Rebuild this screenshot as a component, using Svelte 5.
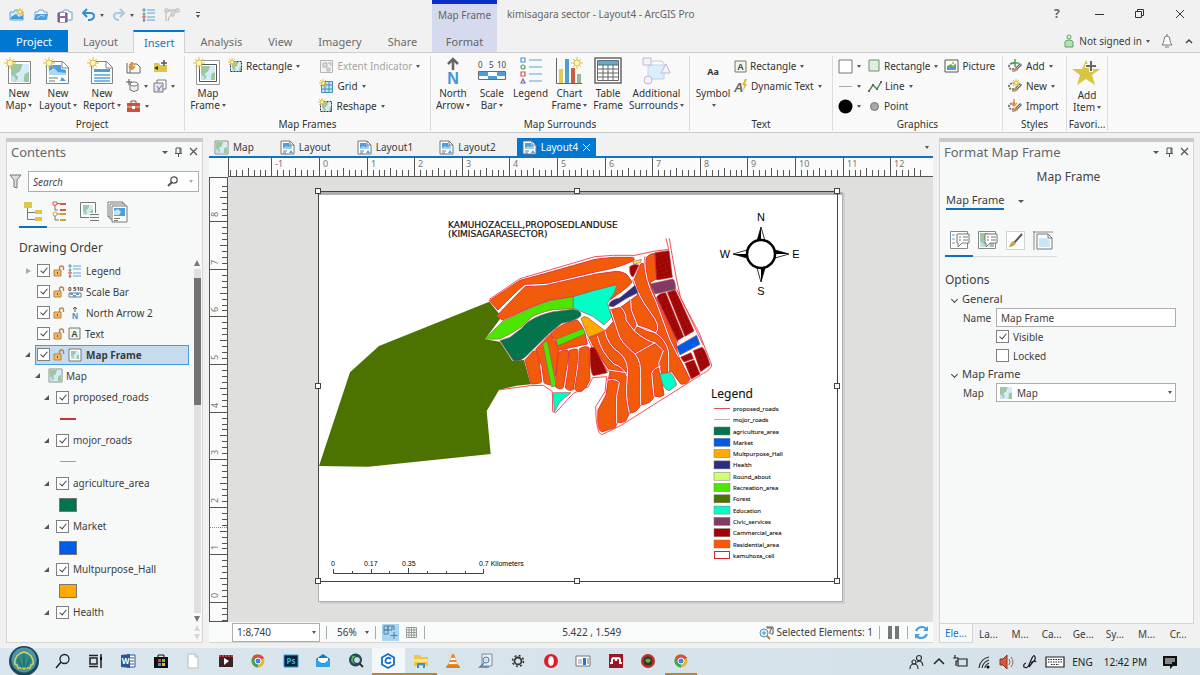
<script lang="ts">
  type Icon = [number, number, string];

  const sun = (x: number, y: number) =>
    `<g stroke="#e2c04c"><path d="M${x} ${y - 6}v12M${x - 6} ${y}h12M${x - 4} ${y - 4}l8 8M${x + 4} ${y - 4}l-8 8"/></g><circle cx="${x}" cy="${y}" r="3" fill="#fdf6b8" stroke="#e2c04c"/>`;

  const smallSun = (x: number, y: number) =>
    `<path d="M${x} ${y - 4}v8M${x - 4} ${y}h8M${x - 3} ${y - 3}l6 6M${x + 3} ${y - 3}l-6 6" stroke="#e2c04c"/><circle cx="${x}" cy="${y}" r="1.8" fill="#fdf3a8" stroke="#e2c04c"/>`;

  const mapArt = (x: number, y: number, s: number) =>
    `<g transform="translate(${x} ${y}) scale(${s / 20})"><path d="M0 0h20v20H0z" fill="#9cc7a2"/><path d="M13 0h7v9l-5 2-1 9H5l3-5-3-4 5-3z" fill="#d5ecf8"/><path d="M0 12l5 3v5H0z" fill="#c3e2e8"/></g>`;

  const docArt = `<path d="M1 1h9l4 4v9H1z" fill="#fff" stroke="#777"/><path d="M10 1v4h4" fill="none" stroke="#777"/><path d="M3 3h6v2l3 1v3H3z" fill="#4a9fdc"/><path d="M3 8l3-2 2 1 4-1v3H3z" fill="#9dd1f3"/><path d="M3 11h4M3 13h3" stroke="#777"/><path d="M9 13l2-3 2 3z" fill="#4a9fdc"/>`;

  const bullets = `<g fill="none" stroke-width="1"><path d="M1 1h2v2H1z" stroke="#4698d8"/><circle cx="2" cy="6" r="1" stroke="#4f9a59"/><path d="M1 8h2v2H1z" stroke="#d3574b"/><path d="M1 13l1-2 1 2z" stroke="#7a68ad"/><path d="M5 2h8M5 5h8M5 9h8M5 12h8" stroke="#59a3dc"/></g>`;

  const brush = `<path d="M7 4q-5 0-6 3 0 4 5 3" fill="none" stroke="#777" stroke-width="2" stroke-dasharray="2 1"/><path d="M13 5l-5 5" stroke="#666" stroke-width="3"/><path d="M8 9q-3 0-4 4 4 0 6-2z" fill="#c98e5d"/><path d="M12.500 5.500l-4 4" stroke="#c6d6e4"/>`;

  const icons: Record<string, Icon> = {
    newProject: [16, 14, `<path d="M1 4h4l1-2h4v2h4v8H1z" fill="#d3ebf8" stroke="#5ca7d8"/><path d="M2 9l5-3 3 3 4-2v4H2z" fill="#3f9bd7"/>${smallSun(11, 4)}`],
    open: [16, 14, `<path d="M2 4h3l1-2h4l1 2h3v7H2z" fill="#fff" stroke="#5ca7d8"/><path d="M1 12l2-6h12l-2 6z" fill="#4a9fdc"/><path d="M4 10q3-4 8-2" stroke="#c4e3f6" fill="none"/>`],
    save: [16, 15, `<path d="M3 4h3l1-2h4l1 2h3v8H3z" fill="#fff" stroke="#5ca7d8"/><path d="M1 5h9v9H1z" fill="#8d6a9f" stroke="#6e5480"/><path d="M3 5h5v3H3zM3 10h5v4H3z" fill="#fff"/>`],
    undo: [15, 14, `<path d="M2 5h7q4 0 4 3t-4 4H7" fill="none" stroke="#2f8fd3" stroke-width="2"/><path d="M6 1L2 5l4 4" fill="none" stroke="#2f8fd3" stroke-width="2"/>`],
    redo: [14, 14, `<path d="M12 5H6Q2 5 2 8t4 4h1" fill="none" stroke="#a9cbe2" stroke-width="2"/><path d="M8 1l4 4-4 4" fill="none" stroke="#a9cbe2" stroke-width="2"/>`],
    list: [14, 14, bullets],
    sketch: [16, 14, `<path d="M2 13V2h12M3 3l8 0M8 6q-4 3-4 7M8 7l6-5" fill="none" stroke="#b5b5b5"/><path d="M1 1h3v3H1zM12 1h3v3h-3zM7 5h3v3H7z" fill="#e5e5e5" stroke="#bbb"/>`],
    newMap: [30, 28, `<path d="M4.500 4.500h22v22h-22z" fill="#fff" stroke="#848484"/>${mapArt(7, 7, 18)}${sun(6, 6)}`],
    newLayout: [30, 28, `<path d="M3.500 4.500h16l6 6v16h-22z" fill="#fff" stroke="#848484"/><path d="M19 4v7h7" fill="none" stroke="#848484"/><path d="M6 8h12v4l5 1v5H6z" fill="#4a9fdc"/><path d="M6 14l5-3 4 4 8 1v2H6z" fill="#a9d8f5"/><path d="M6 21h9M6 24h6" stroke="#777"/><path d="M17 24l2-4 4 4z" fill="#4a9fdc"/>${sun(6, 6)}`],
    newReport: [30, 28, `<path d="M4.500 4.500h15l6 6v16h-21z" fill="#fff" stroke="#848484"/><path d="M19 4v7h7" fill="none" stroke="#848484"/><path d="M7 12h16v3H7z" fill="#4a9fdc"/><path d="M7 18h16M7 21h16M7 24h16" stroke="#7abbe4" stroke-width="2"/>${sun(6, 6)}`],
    mapFrame: [30, 28, `<path d="M3.500 3.500h23v24h-23z" fill="#fff" stroke="#999"/><path d="M6.500 7.500h17v17h-17z" fill="#fff" stroke="#555"/>${mapArt(8, 9, 14)}${sun(6, 6)}`],
    import: [15, 15, `<path d="M4 5h7l3 3v6H4z" fill="#fff" stroke="#666"/><path d="M6 3v6M3 7l3 3 3-3" fill="none" stroke="#e9902e" stroke-width="2"/><path d="M1 4v10h3" fill="none" stroke="#666"/>`],
    folderAdd: [15, 14, `<path d="M1 4h5l1 2h7v7H1z" fill="#dcc74c"/><path d="M1 9l4-2v4z" fill="#333"/><path d="M11 1v6M8 4h6" stroke="#555" stroke-width="1.500"/>`],
    database: [14, 14, `<path d="M4 5v6q4 3 8 0V5" fill="#eee" stroke="#777"/><ellipse cx="8" cy="5" rx="4" ry="2" fill="#fff" stroke="#777"/><path d="M3 0v6M0 3h6" stroke="#555"/>`],
    task: [14, 14, `<path d="M4 1h9v9H4z" fill="#fff" stroke="#777"/><path d="M1 4h9v9H1z" fill="#ebe4f3" stroke="#777"/><path d="M4 7l2 3 3-4M4 11h3" stroke="#7a68ad" fill="none"/>`],
    toolbox: [15, 13, `<path d="M5 3V1h5v2" fill="none" stroke="#a94434"/><path d="M1 3h13v9H1z" fill="#c8543f"/><path d="M1 7h13" stroke="#f3c3b8"/><path d="M6 6h3v3H6z" fill="#fff"/>`],
    frameRect: [14, 14, `${mapArt(3, 3, 10)}<path d="M1.500 2.500h11v10h-11z" fill="none" stroke="#333" stroke-dasharray="2 1"/>${smallSun(3, 3)}`],
    extent: [15, 15, `<path d="M1.500 1.500h12v12h-12z" fill="#f2f2f2" stroke="#b5b5b5"/><path d="M4 4h4v4H4zM8 9h3v3H8zM9 4h3v3" fill="#ddd" stroke="#b5b5b5"/>`],
    grid: [15, 15, `<path d="M2.500 2.500h11v11h-11z" fill="#c5e3f6" stroke="#3d8fca"/><path d="M6 3v11M10 3v11M3 6h11M3 10h11" stroke="#3d8fca"/>${smallSun(4, 4)}`],
    northArrow: [24, 28, `<path d="M12 13V2M7 7l5-5 5 5" fill="none" stroke="#666" stroke-width="2.500"/><text x="12" y="27" text-anchor="middle" font-size="16" font-weight="bold" font-family="Liberation Sans, sans-serif" fill="#3d97d6">N</text>`],
    scaleBar: [30, 28, `<g font-size="8" fill="#444"><text x="1" y="11">0</text><text x="12" y="11">5</text><text x="20" y="11">10</text></g><path d="M1.500 14.500h27v8h-27z" fill="#fff" stroke="#6b6b6b"/><path d="M2 15h9v4H2zM20 15h8v4h-8zM11 19h9v3h-9z" fill="#4a9fdc"/>`],
    legend: [24, 28, `<g fill="none" stroke-width="1.200"><path d="M2 1h4v4H2z" stroke="#4698d8"/><circle cx="4" cy="10" r="2" stroke="#4f9a59"/><path d="M2 15h4v4H2z" stroke="#d3574b"/><path d="M2 26l2-4 2 4z" stroke="#7a68ad"/><path d="M10 3h13M10 10h13M10 17h13M10 24h13" stroke="#59a3dc"/></g>`],
    chart: [28, 28, `<path d="M1.500 1v25.500H27" fill="none" stroke="#666"/><path d="M4 12h4v14H4z" fill="#ddcc56"/><path d="M10 2h4v24h-4z" fill="#4a9fdc"/><path d="M16 11h4v15h-4z" fill="#cf5a48"/><path d="M22 17h4v9h-4z" fill="#8fbd95"/>${sun(22, 6)}`],
    table: [28, 28, `<path d="M1 1h26v25H1z" fill="#fff" stroke="#666" stroke-width="1.500"/><path d="M3.500 3.500h21v20h-21z" fill="#fff" stroke="#666"/><path d="M4 4h20v4H4z" fill="#5cabe0"/><path d="M4 8h20M4 12h20M4 16h20M4 20h20M9 8v15M14 8v15M19 8v15" stroke="#666"/>`],
    surrounds: [28, 28, `<path d="M6 8h16v14H6z" fill="#dceefa" stroke="#bcd4e8"/><path d="M1 1h8v7H1z" fill="#f6f1fa" stroke="#c3b6d6"/><path d="M19 16l5-9 4 9z" fill="#f6f1fa" stroke="#c3b6d6"/><circle cx="6" cy="23" r="4" fill="#f6f1fa" stroke="#c3b6d6"/><path d="M9 4h11l3 4" fill="none" stroke="#cfc4de"/>`],
    aa: [24, 28, `<text x="12" y="18" text-anchor="middle" font-size="9" font-weight="bold" fill="#333">Aa</text>`],
    textBox: [13, 13, `<path d="M1 1h11v11H1z" fill="#eef6ee" stroke="#777"/><text x="6.500" y="10" text-anchor="middle" font-size="9" font-weight="bold" font-family="Liberation Sans, sans-serif" fill="#444">A</text>`],
    dynText: [14, 15, `<text x="0" y="13" font-size="13" font-style="italic" font-weight="bold" font-family="Liberation Sans, sans-serif" fill="#666">A</text><path d="M11 0L8 6h2l-1 6 4-7h-2l2-5z" fill="#dcb83c"/>`],
    box: [15, 15, `<path d="M1 1h13v13H1z" fill="#fff" stroke="#777"/>`],
    line: [15, 15, `<path d="M1 7.500h13" stroke="#aaa"/>`],
    dot: [15, 15, `<circle cx="7.500" cy="7.500" r="7" fill="#000"/>`],
    greenRect: [13, 14, `<path d="M1 1h10v11H1z" fill="#dcf0dc" stroke="#6f8f74"/>`],
    polyline: [14, 13, `<path d="M1 11l4-6 4 4 4-7" fill="none" stroke="#4f8f59" stroke-width="1.500"/><path d="M0 10h2v2H0zM4 4h2v2H4zM8 8h2v2H8zM12 1h2v2h-2z" fill="#666"/>`],
    point: [13, 13, `<circle cx="6.500" cy="6.500" r="4" fill="#a8a8a8" stroke="#777"/>`],
    picture: [15, 14, `<path d="M1 1h13v12H1z" fill="#fff" stroke="#555"/><path d="M3 7l4-2 2 2 3-3v4H3z" fill="#6daa5c"/><path d="M3 8h9v3H3z" fill="#4a9fdc"/><circle cx="9" cy="4" r="1.200" fill="#dcb83c"/>`],
    styleAdd: [15, 14, `${brush}<path d="M7 0v8M3 4h8" stroke="#4d9f58" stroke-width="1.500"/>`],
    styleNew: [15, 14, `${brush}${smallSun(8, 4)}`],
    styleImport: [15, 14, `${brush}<path d="M6 0v7M3 4l3 3 3-3" fill="none" stroke="#e9902e" stroke-width="1.500"/>`],
    star: [30, 30, `<path d="M14 3l4 9h10l-8 6 3 10-9-6-9 6 3-10-8-6h10z" fill="#d8c542"/><path d="M19 3v12M13 9h12" stroke="#f8f8f8" stroke-width="4"/><path d="M19 4v10M14 9h10" stroke="#666" stroke-width="2"/>`],
    user: [12, 15, `<circle cx="6" cy="3" r="2" fill="#dff2df" stroke="#58a662"/><path d="M2 13V8q0-2 4-2t4 2v5z" fill="#b9deb9" stroke="#58a662"/>`],
    bell: [14, 15, `<path d="M2 11q2-2 2-5 0-4 3-4t3 4q0 3 2 5z" fill="#fff" stroke="#777"/><path d="M7 0v2M5 13h4" stroke="#777"/>`],
    up: [10, 8, `<path d="M2 6l3-3 3 3" fill="none" stroke="#444" stroke-width="1.500"/>`],
    filter: [13, 15, `<path d="M1 1h11L8 6v8l-3-1V6z" fill="#ddd" stroke="#777"/>`],
    search: [13, 13, `<circle cx="8" cy="5" r="3.200" fill="none" stroke="#555" stroke-width="1.300"/><path d="M6 7l-4 4" stroke="#555" stroke-width="2"/>`],
    byDraw: [20, 22, `<path d="M1 1h8v6H1zM12 9h7v4h-7zM12 16h7v4h-7z" fill="#dcc74c"/><path d="M4.500 7v11.500H12M5 11.500h7" fill="none" stroke="#777"/>`],
    bySource: [18, 22, `<path d="M1 1h4v3H1z" fill="#fff" stroke="#d3574b"/><circle cx="3" cy="13" r="2" fill="#fff" stroke="#c6a63b"/><path d="M3 4v5h3M5 2.500h3M3 15v4h4M5 13h3" fill="none" stroke="#777"/><path d="M8 3h6M8 9h6" stroke="#d3574b" stroke-width="2"/><path d="M8 13h6M8 19h6" stroke="#c6a63b" stroke-width="2"/>`],
    byMap: [21, 22, `<path d="M1.500 1.500h15v15h-15z" fill="#fff" stroke="#777"/>${mapArt(4, 4, 10)}<path d="M10 12h10v8H10z" fill="#f7f9f9"/><path d="M11 13.500h9M11 16.500h9M11 19.500h9" stroke="#777"/>`],
    byLayout: [21, 22, `<path d="M1 1h15v15H1z" fill="#fff" stroke="#777"/><path d="M3 3h15v15H3z" fill="#fff" stroke="#777"/><path d="M5 5h15v16H5z" fill="#fff" stroke="#777"/><path d="M7 7h11v8H7z" fill="#4a9fdc"/><path d="M7 10l4-2 3 3-2 3H7z" fill="#c7e5f7"/><path d="M7 17.500h6M7 19.500h4" stroke="#777"/>`],
    lock: [12, 13, `<path d="M6.500 6V4q0-2 2-2t2 2v2" fill="none" stroke="#b98345" stroke-width="1.400"/><path d="M1 6h7v6H1z" fill="#f3b866" stroke="#b98345"/><path d="M4 8h1v2H4z" fill="#7a5223"/>`],
    scaleMini: [14, 13, `<text x="0" y="6" font-size="6" font-weight="bold" fill="#444">0 510</text><path d="M1 8h12v4H1z" fill="#fff" stroke="#777"/><path d="M2 8h3v2H2zM8 8h3v2H8zM5 10h3v2H5z" fill="#4a9fdc"/>`],
    northMini: [14, 14, `<path d="M7 6V1M5 3l2-2 2 2" fill="none" stroke="#555"/><text x="7" y="13" text-anchor="middle" font-size="8" font-weight="bold" fill="#3d97d6">N</text>`],
    frameMini: [14, 14, `<path d="M1 1h12v12H1z" fill="#fff" stroke="#777"/>${mapArt(3, 3, 8)}`],
    map: [15, 15, `<path d="M1 1h13v13H1z" fill="#fff" stroke="#8a8a8a"/>${mapArt(2, 2, 11)}`],
    doc: [15, 15, docArt],
    optList: [21, 21, `<path d="M1.500 1.500h17v17h-17z" fill="#fff" stroke="#888"/><path d="M3 5h3M3 9h3M3 13h3" stroke="#59a3dc"/><path d="M8 4h12v9h-7l-4 4v-4H8z" fill="#fff" stroke="#777"/><path d="M10 7h2M14 7h5M10 10h2M14 10h5" stroke="#777"/>`],
    optMap: [21, 21, `<path d="M1.500 1.500h17v17h-17z" fill="#fff" stroke="#888"/>${mapArt(3, 3, 14)}<path d="M8 4h12v9h-7l-4 4v-4H8z" fill="#fff" stroke="#777"/><path d="M10 7h2M14 7h5M10 10h2M14 10h5" stroke="#777"/>`],
    optBrush: [21, 21, `<path d="M1.500 1.500h18v18h-18z" fill="#fff" stroke="#aaa" stroke-dasharray="1 1"/><path d="M17 4l-8 9" stroke="#555" stroke-width="2"/><path d="M9 11q-3 0-5 6 5 0 7-4z" fill="#c3a15c"/>`],
    optPage: [22, 21, `<path d="M1 2h20M2 1v19" stroke="#888"/><path d="M5 4h11l4 4v11H5z" fill="#fff" stroke="#777"/><path d="M7 8h8l3 3v6H7z" fill="#cbe5f6"/><path d="M16 4v4h4" fill="none" stroke="#777"/>`],
    snap: [17, 17, `<path d="M2 2h4v4H2zM6 2h4v4H6zM2 6h4v4H2z" fill="none" stroke="#4f7f9f"/><path d="M12 8v7M8.500 11.500h7" stroke="#4f7f9f"/><path d="M10 2h2v4" fill="none" stroke="#4f7f9f"/>`],
    gridMini: [13, 13, `<path d="M1.500 1.500h10v10h-10zM4 1v10M6.500 1v10M9 1v10M1 4h10M1 6.500h10M1 9h10" fill="none" stroke="#999"/>`],
    zoomSel: [15, 15, `<circle cx="5" cy="8" r="4" fill="#e5f3fb" stroke="#4a8fc4"/><path d="M5 6v4M3 8h4" stroke="#4a8fc4"/><path d="M8 11l3 3" stroke="#b5814a" stroke-width="2"/><path d="M7 2h7v7h-2" fill="none" stroke="#555"/><path d="M8 3h5l-2 3v3" fill="none" stroke="#555"/>`],
    refresh: [15, 15, `<path d="M2 6q2-4 6-4 3 0 4 2M13 9q-2 4-6 4-3 0-4-2" fill="none" stroke="#45a0df" stroke-width="2.200"/><path d="M14 1v5H9zM1 14V9h5z" fill="#45a0df"/>`],
    tSearch: [16, 16, `<circle cx="9.500" cy="6" r="4.500" fill="none" stroke="#222" stroke-width="1.300"/><path d="M6 9l-5 6" stroke="#222" stroke-width="1.500"/>`],
    tTask: [16, 16, `<path d="M1 2.500h9M1 13.500h9" stroke="#222" stroke-width="1.500"/><path d="M2 5h7v6H2zM13 1v3M13 6v9" fill="none" stroke="#222" stroke-width="1.500"/><path d="M12 4h2v3h-2z"/>`],
    tWord: [16, 16, `<path d="M7 2h8v12H7z" fill="#fff" stroke="#2b5797"/><path d="M10 5h4M10 8h4M10 11h4" stroke="#2b5797"/><path d="M1 2l9-1v14l-9-1z" fill="#2b5797"/><text x="5.500" y="11" text-anchor="middle" font-size="8" font-weight="bold" fill="#fff">W</text>`],
    tStore: [16, 16, `<path d="M5 5V2h6v3" fill="none" stroke="#111"/><path d="M1 4h14v11H1z" fill="#111"/><path d="M5 6h3v3H5z" fill="#e64a2b"/><path d="M9 6h3v3H9z" fill="#7fb93a"/><path d="M5 10h3v3H5z" fill="#34a0dc"/><path d="M9 10h3v3H9z" fill="#f2b82b"/>`],
    tFile: [16, 16, `<path d="M3 1h7l3 3v11H3z" fill="#fff" stroke="#bbb"/><path d="M10 1v3h3" fill="none" stroke="#bbb"/>`],
    tVideo: [16, 16, `<path d="M1 2h14v12H1z" fill="#3d2226"/><path d="M1 3h14" stroke="#c3403f" stroke-dasharray="2 1" stroke-width="2"/><path d="M6 5l5 3-5 4z" fill="#fff"/>`],
    tChrome: [16, 16, `<circle cx="8" cy="8" r="6.500" fill="#e2b93b"/><path d="M8 8L2 5q2-4 6-3.500 4 0 6 3.500z" fill="#dd4b39"/><path d="M8 8L2 5q-1.500 4 1 7 2 2.500 5 2.500z" fill="#3fa35b"/><circle cx="8" cy="8" r="3" fill="#4a84d8" stroke="#fff"/>`],
    tPs: [16, 16, `<path d="M1 2h14v12H1z" fill="#0b2035" stroke="#2aa0d8"/><text x="8" y="11" text-anchor="middle" font-size="8" font-weight="bold" fill="#36b3f2">Ps</text>`],
    tMail: [16, 16, `<path d="M1 6l7-5 7 5v8H1z" fill="#1678c2"/><path d="M3 5h10v5H3z" fill="#fff"/><path d="M1 6l7 5 7-5v8H1z" fill="#2ea3ea"/>`],
    tGis: [16, 16, `<circle cx="7.500" cy="7" r="6.500" fill="#1c4c58"/><path d="M4 3q5-1 6 3l-4 5-3-3z" fill="#5fae6b"/><circle cx="9" cy="7" r="3.500" fill="#bfe2f2" stroke="#333"/><path d="M11 10l4 4" stroke="#333" stroke-width="2"/>`],
    tPro: [16, 16, `<path d="M8 1l6 3.500v7L8 15l-6-3.500v-7z" fill="#fff" stroke="#1670c4" stroke-width="1.800"/><path d="M11 6q-3-2.500-5 0-1.500 3 1 4 2 .8 4-1" fill="none" stroke="#1670c4" stroke-width="1.800"/>`],
    tFolder: [16, 16, `<path d="M1 2h6l1 2h7v9H1z" fill="#f1c54a"/><path d="M1 6h14v3H1z" fill="#fbe08d"/><path d="M4 15v-5h8v5h-2v-3H6v3z" fill="#3b8ed0"/>`],
    tVlc: [16, 16, `<path d="M7 1h2l4 11H3z" fill="#ef8a24"/><path d="M6 5h4l1 2H5zM4.500 9h7l.6 2H4z" fill="#fff"/><path d="M2 12h12l1 3H1z" fill="#e07c1c"/>`],
    tNote: [16, 16, `<path d="M4 1h10v12H4z" fill="#e8eef4" stroke="#889"/><circle cx="8" cy="7" r="3" fill="#cfe3f2" stroke="#5580a4"/><path d="M6 10l-4 4h9" fill="none" stroke="#5580a4" stroke-width="1.500"/>`],
    tGear: [16, 16, `<circle cx="8" cy="8" r="3.500" fill="none" stroke="#333" stroke-width="1.800"/><circle cx="8" cy="8" r="5.500" fill="none" stroke="#333" stroke-width="1.500" stroke-dasharray="2 2.320"/>`],
    tOpera: [16, 16, `<circle cx="8" cy="8" r="7" fill="#d9202c"/><ellipse cx="8" cy="8" rx="2.800" ry="4.800" fill="#fff"/>`],
    tApp: [16, 16, `<path d="M1 3h14v10H1z" fill="#fff" stroke="#777"/><path d="M3 6h4v5H3z" fill="#ccc"/><path d="M8 5h3v7H8z" fill="#1f78c0"/><path d="M12 6h2M12 8h2M12 10h2" stroke="#777"/>`],
    tMendeley: [16, 16, `<path d="M1 1h14v14H1z" fill="#9c1626"/><path d="M4 11V7q0-2 2-2t2 3q0-3 2-3t2 2v4M2 10h2M12 10h2" fill="none" stroke="#fff" stroke-width="2"/>`],
    tCam: [16, 16, `<circle cx="8" cy="8" r="7" fill="#c22f26"/><circle cx="8" cy="8" r="4.500" fill="#263b2a"/><path d="M5 7q3-3 6 0-1 3-3 3T5 7z" fill="#6dae3e"/>`],
    people: [16, 16, `<g fill="none" stroke="#333" stroke-width="1.200"><circle cx="10" cy="4" r="2.500"/><circle cx="5" cy="8" r="2"/><path d="M1 15q0-5 4-5t4 5M8 8q5-3 6 4"/></g>`],
    chevron: [14, 16, `<path d="M2 10l5-5 5 5" fill="none" stroke="#222" stroke-width="1.500"/>`],
    battery: [16, 16, `<path d="M5 5h9v7H5zM2 1v3M0 4h5v3H3v5" fill="none" stroke="#222" stroke-width="1.200"/>`],
    wifi: [16, 16, `<g fill="none" stroke="#333" stroke-width="1.200"><path d="M3 14Q4 5 13 3M6 14q1-6 7-8M9 14q0-3 4-5"/></g><circle cx="12" cy="13" r="1.500"/>`],
    speaker: [16, 16, `<path d="M1 5h3l4-4v14l-4-4H1z" fill="#e0523c" stroke="#7c3a2e"/><path d="M10 5q2 3 0 6M12 3q4 5 0 10" fill="none" stroke="#a45f4f"/>`],
    pen: [16, 16, `<g fill="none" stroke="#222" stroke-width="1.300"><path d="M4 9q-3 1-2 4 3 2 5-2l3-7q2-4 3-1t-3 6l-3 4M9 9q4-3 5-1"/></g>`],
    keyboard: [20, 16, `<path d="M1 3h18v10H1z" fill="#fff" stroke="#222" stroke-width="1.200"/><path d="M3 5.500h14M3 8h14M6 10.500h8" stroke="#222" stroke-dasharray="1.500 1"/>`],
    notify: [16, 16, `<path d="M1 2h14v10h-4l-3 3v-3H1z" fill="#111"/><path d="M3 5h10M3 7h10M3 9h7" stroke="#fff"/>`],
    pin: [9, 11, `<path d="M2 6V1h5v5M1 6.500h7M4.500 7v3M6 1v5" fill="none" stroke="#555"/>`],
    close: [10, 10, `<path d="M1 1l7 7M8 1L1 8" stroke="#555" stroke-width="1.200"/>`],
    min: [12, 12, `<path d="M1 6.500h9" stroke="#333"/>`],
    restore: [12, 12, `<path d="M1.500 3.500h6v6h-6zM3.500 3V1.500h6v6H8" fill="none" stroke="#333"/>`],
    quit: [12, 12, `<path d="M2 2l8 8M10 2l-8 8" stroke="#333"/>`],
    shell: [30, 30, `<circle cx="15" cy="15" r="15" fill="#1c4a5c"/><circle cx="15" cy="14" r="12.500" fill="#4a96a6"/><path d="M9 22l-1-3-2-1 0-4 2-4 4-3 3-1 3 1 4 3 2 4 0 4-2 1-1 3h-5l-1 1-1-1z" fill="#2f8b86" stroke="#d8cf62" stroke-width="1.500"/><path d="M15 22V9M13 22l-4-9M17 22l4-9" stroke="#1f6468" fill="none"/>`],
  };

  const quickAccess = ['newProject', 'open', 'save', 'undo+', 'redo+', 'list', 'sketch'];
  const ribbonTabs = ['Project', 'Layout', 'Insert', 'Analysis', 'View', 'Imagery', 'Share'];
  let activeTab = $state('Insert');

  const drawing = [
    { icon: 'list', name: 'Legend', closed: true },
    { icon: 'scaleMini', name: 'Scale Bar' },
    { icon: 'northMini', name: 'North Arrow 2' },
    { icon: 'textBox', name: 'Text' },
  ];
  const layers = [
    { name: 'proposed_roads', kind: 'road' },
    { name: 'mojor_roads', kind: 'road-thin' },
    { name: 'agriculture_area', kind: 'green' },
    { name: 'Market', kind: 'blue' },
    { name: 'Multpurpose_Hall', kind: 'amber' },
    { name: 'Health', kind: '' },
  ];

  const docs = ['Map', 'Layout', 'Layout1', 'Layout2', 'Layout4'];
  const paneTabs = ['Ele...', 'La...', 'M...', 'Ca...', 'Ge...', 'Sy...', 'M...', 'Cr...'];
  const taskIcons = [
    'tSearch', 'tTask', 'tWord', 'tStore', 'tFile', 'tVideo', 'tChrome', 'tPs', 'tMail', 'tGis',
    'tPro', 'tFolder', 'tVlc', 'tNote', 'tGear', 'tOpera', 'tApp', 'tMendeley', 'tCam', 'tChrome',
  ];
  const trayIcons = ['people', 'chevron', 'battery', 'wifi', 'speaker', 'pen', 'keyboard'];

  const legend = [
    ['agriculture_area', '#04744c'],
    ['Market', '#005ce6'],
    ['Multpurpose_Hall', '#ffaa00'],
    ['Health', '#2c2f7f'],
    ['Round_about', '#d1ff73'],
    ['Recreation_area', '#4ce600'],
    ['Forest', '#4c7300'],
    ['Education', '#00ffc5'],
    ['Civic_services', '#833b66'],
    ['Cammercial_area', '#a80000'],
    ['Residential_area', '#ff5500'],
  ];

  // ruler: one inch is 47.6px, cut in eighths
  const INCH = 47.6;
  let boardWidth = $state(705);
  let boardHeight = $state(445);
  const hPos = (t: number) => Math.round(90 + (t * INCH) / 8);
  const vPos = (t: number) => Math.round(424 - (t * INCH) / 8);
  let hTicks = $derived(Array.from({ length: 300 }, (_, i) => i - 15).filter((t) => hPos(t) < boardWidth - 8));
  let vTicks = $derived(Array.from({ length: 100 }, (_, i) => i - 20).filter((t) => vPos(t) > 4 && vPos(t) < boardHeight - 2));
  const handles = [[318, 191], [577, 191], [837, 191], [318, 386], [837, 386], [318, 581], [577, 581], [837, 581]];

  const blocks = [
    'M58 212L150 151Q240 127 375 88L430 82L488 82Q498 88 488 93Q450 112 380 125L230 160L165 163Q140 182 84 240Z',
    'M80 258L165 170L225 167L380 132L440 124Q465 126 474 138L486 156Q480 168 440 195L420 210L437 167L370 182L310 200L240 210L190 228L97 270Z',
    'M240 313Q270 280 322 270Q335 282 345 310L352 342L268 360Q256 350 258 330Z',
    'M165 390L190 363Q202 362 205 374L215 455Q212 462 183 462Z',
    'M197 358L238 315Q250 318 262 350Q272 362 264 390L252 460Q242 470 222 458L216 410Z',
    'M264 370Q280 356 292 360Q300 366 292 400L280 472Q272 482 256 470Z',
    'M297 362Q312 354 322 358Q326 370 320 410L310 478Q300 486 286 474L296 410Z',
    'M328 356Q345 346 357 352L360 448Q350 475 335 484Q320 486 314 478L326 410Z',
    'M530 82Q540 70 553 70L560 146L540 158L555 200L618 330L622 372L660 448Q650 465 632 462L605 425L572 430L582 495Q570 505 552 498Q548 520 512 525Q500 550 478 549L468 572Q455 582 441 576L437 592L395 606Q380 600 384 540L408 495L414 455L420 425L385 370L355 324L405 303L430 275L420 240L452 232L503 195L492 150L512 102Q520 96 528 110Z',
  ];
  const roads = [
    'M526 80Q520 120 540 175L560 220L600 330L625 380',
    'M490 148Q505 200 540 245Q575 290 558 308Q530 305 498 285',
    'M453 232Q470 250 468 270L492 302L502 285L484 240L482 208',
    'M500 288Q540 296 565 315Q600 345 596 385L596 425',
    'M492 302Q530 335 555 338L580 362L566 400L572 430',
    'M422 240L445 310Q450 335 495 372Q515 395 512 440L512 525',
    'M495 372L555 338',
    'M405 303Q412 345 450 370Q478 395 472 440Q465 500 478 548',
    'M382 318Q395 370 432 402Q462 412 472 440',
    'M355 324Q375 370 415 420L470 428',
    'M412 450Q440 445 448 458L440 500L440 580',
    'M572 410Q552 412 545 430L552 500',
  ];
  const lots: [string, string][] = [
    ['M45 328L100 272L190 230L240 212L310 200V236L250 239Q200 250 185 262L155 290L120 312L90 327Z', '#4ce600'],
    ['M310 200L370 182L437 165Q442 168 432 190L412 220L425 262L402 285L370 260L310 234Z', '#00ffc5'],
    ['M90 332L120 322L155 295Q180 260 250 245L310 238Q336 242 333 257Q320 272 275 280L240 308L165 382Q150 396 130 392Z', '#04744c'],
    ['M333 266Q340 256 352 262L405 302L355 322Z', '#ffaa00'],
    ['M258 328L340 295L345 312L262 348Z', '#4ce600'],
    ['M218 340L232 332L258 462Q252 474 244 470Z', '#4ce600'],
    ['M250 488L303 488L270 515L253 546Z', '#00ffc5'],
    ['M540 162L608 147Q616 150 617 178L555 192Z', '#833b66'],
    ['M620 350L680 316L690 343L630 375Z', '#005ce6'],
    ['M570 432L600 428Q612 436 620 465L598 482Q578 480 570 432Z', '#00ffc5'],
    ['M416 228Q416 210 450 203L495 166L504 188L470 205L430 230Z', '#2c2f7f'],
    ['M488 95L514 88L512 97L492 103Z', '#ffe94d'],
    ['M479 110Q490 100 507 105L490 141Q478 140 479 110Z', '#a80000'],
  ];
  const shops = [
    'M555 68L597 62L607 142L560 150Z',
    'M560 202Q565 190 587 188L641 320L622 332Z',
    'M592 187L615 180Q622 190 672 303L645 319Z',
    'M632 382L663 368L670 386L642 396Z',
    'M670 362L696 352Q705 356 720 405L692 425Z',
    'M645 400L672 390L690 432L664 447Z',
    'M360 355Q370 346 378 360L412 428L370 437Q360 430 360 355Z',
  ];
</script>

{#snippet ic(name: string)}
  <svg class="ic" width={icons[name][0]} height={icons[name][1]} viewBox="0 0 {icons[name][0]} {icons[name][1]}" aria-hidden="true">{@html icons[name][2]}</svg>
{/snippet}

{#snippet arrow()}<i class="arrow"></i>{/snippet}

{#snippet big(icon: string, top: string, bottom = '', drop = true)}
  <button class="big">
    {@render ic(icon)}
    <span>{top}</span>
    <span>{bottom}{#if drop}{@render arrow()}{/if}</span>
  </button>
{/snippet}

{#snippet small(icon: string, label = '', drop = true, off = false)}
  <button class="small" disabled={off} aria-label={label || icon}>
    {@render ic(icon)}{#if label}<span>{label}</span>{/if}{#if drop}{@render arrow()}{/if}
  </button>
{/snippet}

<div class="app">
  <header>
    <div class="quick">
      {#each quickAccess as q}
        <button aria-label={q.replace('+', '')}>{@render ic(q.replace('+', ''))}{#if q.endsWith('+')}{@render arrow()}{/if}</button>
      {/each}
      <button class="custom" aria-label="Customize toolbar">{@render arrow()}</button>
    </div>
    <nav class="tabs">
      {#each ribbonTabs as tab}
        <button class:file={tab === 'Project'} class:active={tab === activeTab} onclick={() => (activeTab = tab)}>{tab}</button>
      {/each}
    </nav>
    <div class="context"><span>Map Frame</span><button>Format</button></div>
    <div class="title">
      <span>kimisagara sector - Layout4 - ArcGIS Pro</span>
      <button aria-label="Help">?</button>
      <button aria-label="Minimize">{@render ic('min')}</button>
      <button aria-label="Restore">{@render ic('restore')}</button>
      <button aria-label="Close">{@render ic('quit')}</button>
    </div>
    <div class="account">
      <button>{@render ic('user')} Not signed in {@render arrow()}</button>
      <button aria-label="Notifications">{@render ic('bell')}</button>
      <button aria-label="Collapse ribbon">{@render ic('up')}</button>
    </div>
  </header>

  <div class="ribbon">
    <section class="group project">
      <div class="tools">
        {@render big('newMap', 'New', 'Map')}
        {@render big('newLayout', 'New', 'Layout')}
        {@render big('newReport', 'New', 'Report')}
        <div class="stack">
          {@render small('import', '', false)}
          {@render small('database')}
          {@render small('toolbox')}
        </div>
        <div class="stack">
          {@render small('folderAdd', '', false)}
          {@render small('task')}
        </div>
      </div>
      <h2>Project</h2>
    </section>
    <section class="group frames">
      <div class="tools">
        {@render big('mapFrame', 'Map', 'Frame')}
        <div class="stack">{@render small('frameRect', 'Rectangle')}</div>
        <div class="stack">
          {@render small('extent', 'Extent Indicator', true, true)}
          {@render small('grid', 'Grid')}
          {@render small('frameRect', 'Reshape')}
        </div>
      </div>
      <h2>Map Frames</h2>
    </section>
    <section class="group surrounds">
      <div class="tools">
        {@render big('northArrow', 'North', 'Arrow')}
        {@render big('scaleBar', 'Scale', 'Bar')}
        {@render big('legend', 'Legend', '', false)}
        {@render big('chart', 'Chart', 'Frame')}
        {@render big('table', 'Table', 'Frame', false)}
        {@render big('surrounds', 'Additional', 'Surrounds')}
      </div>
      <h2>Map Surrounds</h2>
    </section>
    <section class="group text">
      <div class="tools">
        {@render big('aa', 'Symbol')}
        <div class="stack">
          {@render small('textBox', 'Rectangle')}
          {@render small('dynText', 'Dynamic Text')}
        </div>
      </div>
      <h2>Text</h2>
    </section>
    <section class="group graphics">
      <div class="tools">
        <div class="stack">
          {@render small('box')}
          {@render small('line')}
          {@render small('dot')}
        </div>
        <div class="stack">
          {@render small('greenRect', 'Rectangle')}
          {@render small('polyline', 'Line')}
          {@render small('point', 'Point', false)}
        </div>
        <div class="stack">{@render small('picture', 'Picture', false)}</div>
      </div>
      <h2>Graphics</h2>
    </section>
    <section class="group styles">
      <div class="tools">
        <div class="stack">
          {@render small('styleAdd', 'Add')}
          {@render small('styleNew', 'New')}
          {@render small('styleImport', 'Import', false)}
        </div>
      </div>
      <h2>Styles</h2>
    </section>
    <section class="group favorites">
      <div class="tools">{@render big('star', 'Add', 'Item')}</div>
      <h2>Favori...</h2>
    </section>
  </div>

  <main>
    <aside class="pane contents">
      <div class="pane-head">
        <h1>Contents</h1>
        {@render arrow()}
        <button aria-label="Pin">{@render ic('pin')}</button>
        <button aria-label="Close">{@render ic('close')}</button>
      </div>
      <div class="search">
        {@render ic('filter')}
        <label><input type="text" placeholder="Search" aria-label="Search" />{@render ic('search')}{@render arrow()}</label>
      </div>
      <div class="views">
        {#each ['byDraw', 'bySource', 'byMap', 'byLayout'] as v, i}
          <button class:on={i === 0} aria-label={v}>{@render ic(v)}</button>
        {/each}
      </div>
      <h3>Drawing Order</h3>
      <div class="tree-wrap">
        <ul class="tree">
          {#each drawing as d}
            <li>
              <span class="twist">{#if d.closed}<i class="closed"></i>{/if}</span>
              <label><input type="checkbox" checked />{@render ic('lock')}{@render ic(d.icon)}<span>{d.name}</span></label>
            </li>
          {/each}
          <li class="selected">
            <span class="twist"><i class="opened"></i></span>
            <label><input type="checkbox" checked />{@render ic('lock')}{@render ic('frameMini')}<b>Map Frame</b></label>
          </li>
          <li class="map-row"><span class="twist"><i class="opened"></i></span>{@render ic('map')}<span>Map</span></li>
          {#each layers as l}
            <li class="layer">
              <span class="twist"><i class="opened"></i></span>
              <label><input type="checkbox" checked /><span>{l.name}</span></label>
            </li>
            {#if l.kind}<li class="symbol"><i class={l.kind}></i></li>{/if}
          {/each}
        </ul>
        <div class="scroll"><i class="s-up"></i><div class="track"><div class="thumb"></div></div><i class="s-down"></i><i class="s-up faint"></i><i class="s-down faint"></i></div>
      </div>
    </aside>

    <section class="view">
      <div class="docs">
        {#each docs as d}
          <button class:active={d === 'Layout4'}>
            {@render ic(d === 'Map' ? 'map' : 'doc')}<span>{d}</span>
            {#if d === 'Layout4'}<svg class="ic" width="9" height="9" viewBox="0 0 9 9"><path d="M1 1l7 7M8 1L1 8" stroke="#fff" /></svg>{/if}
          </button>
        {/each}
        {@render arrow()}
      </div>
      <div class="board">
        <div class="corner"></div>
        <div class="ruler-h">
          <svg width="100%" height="18">
            {#each hTicks as t}
              <path d="M{hPos(t)}.5 {t % 8 ? (t % 4 ? 12 : 10) : 0}V18" stroke="#555" />
              {#if t % 8 === 0}<text x={hPos(t) + 4} y="9">{t / 8}</text>{/if}
            {/each}
          </svg>
        </div>
        <div class="ruler-v">
          <svg width="18" height="100%">
            {#each vTicks as t}
              <path d="M{t % 8 ? (t % 4 ? 12 : 10) : 0} {vPos(t)}.5H18" stroke="#555" />
              {#if t % 8 === 0}<text transform="translate(8 {vPos(t) - 4}) rotate(-90)">{t / 8}</text>{/if}
            {/each}
            <path d="M0 349.500H18" stroke="#888" stroke-dasharray="1 1" />
          </svg>
        </div>
        <div class="canvas" bind:clientWidth={boardWidth} bind:clientHeight={boardHeight}>
          <svg width="705" height="445" viewBox="228 177 705 445">
            <defs>
              <pattern id="plots" width="13" height="13" patternUnits="userSpaceOnUse" patternTransform="rotate(-12)">
                <path d="M0 0h13v13H0z" fill="#fb5603" />
                <path d="M0 6h13M6 0v13" stroke="#cf6a26" stroke-width="1.400" />
              </pattern>
              <pattern id="shops" width="13" height="13" patternUnits="userSpaceOnUse" patternTransform="rotate(-20)">
                <path d="M0 0h13v13H0z" fill="#a80000" />
                <path d="M0 6h13M6 0v13" stroke="#7d2a20" stroke-width="1.400" />
              </pattern>
            </defs>
            <path d="M320 193h525v411H320z" fill="#cfcfce" />
            <path d="M318 192h525v410H318z" fill="#b0afb0" />
            <path d="M319 195h523v406H319z" fill="#fff" />

            <g transform="translate(300 210) scale(0.33333)">
              <path d="M57 768L150 487L237 408L568 275L605 320L555 388L600 395L637 452L672 450L692 523L650 527L597 540L560 603L572 732L205 770Z" fill="#4c7300" />
            </g>
            <g transform="translate(470 230) scale(0.33333)" stroke-linejoin="round">
              <g fill="none" stroke="#ee5058" stroke-width="3">
                <path d="M58 208L150 146L375 80L430 76L495 76L550 64L596 58L588 25" />
                <path d="M598 25L604 62L620 150L632 205L688 310L725 405Q722 420 700 430L602 492L450 588L395 614Q378 612 377 530L405 485L410 440L368 443L355 470L310 490L257 548L248 545L247 485L220 466L180 467L85 480" />
                <path d="M620 178L700 346M560 205L625 340" />
              </g>
              {#each blocks as b}<path d={b} fill="url(#plots)" stroke="#e0363a" stroke-width="3" />{/each}
              {#each roads as r}<path d={r} fill="none" stroke="#e0363a" stroke-width="7" />{/each}
              {#each roads as r}<path d={r} fill="none" stroke="#fff" stroke-width="3" />{/each}
              {#each lots as [d, fill]}<path {d} {fill} stroke="#a0565a" stroke-width="2" />{/each}
              {#each shops as s}<path d={s} fill="url(#shops)" stroke="#c5202a" stroke-width="2" />{/each}
            </g>

            <g class="map-title">
              <text x="448" y="228">KAMUHOZACELL,PROPOSEDLANDUSE</text>
              <text x="448" y="237">(KIMISAGARASECTOR)</text>
            </g>

            <g class="compass">
              <path d="M761 227l4 14h-8zM761 282l-4-14h8zM733 254l14-4v8zM789 254l-14-4v8z" fill="#fff" stroke="#000" stroke-width="0.800" />
              <path d="M761 227v14h-4zM761 282v-14h4zM733 254h14v4zM789 254h-14v-4z" />
              <circle cx="761" cy="254" r="14" fill="#fff" stroke="#000" stroke-width="2.500" />
              <text x="761" y="221">N</text>
              <text x="761" y="295">S</text>
              <text x="725" y="258">W</text>
              <text x="796" y="258">E</text>
            </g>

            <g class="legend">
              <text class="head" x="711" y="398">Legend</text>
              <path d="M714 408.500h16" stroke="#d8555a" />
              <text x="733" y="411">proposed_roads</text>
              <path d="M714 419.500h16" stroke="#e3a1a3" />
              <text x="733" y="422">mojor_roads</text>
              {#each legend as [name, fill], i}
                <rect x="714" y={427 + i * 11.3} width="16" height="8" {fill} stroke="#777" stroke-width="0.500" />
                <text x="733" y={433.500 + i * 11.3}>{name}</text>
              {/each}
              <rect x="714.500" y="551.500" width="15" height="7" fill="#fff" stroke="#d8242c" />
              <text x="733" y="557.500">kamuhoza_cell</text>
            </g>

            <g class="scale">
              <path d="M333.500 569v4.500h150V569M352.500 571v3M371.500 569v4M389.500 571v3M408.500 568v5M427.500 571v3M446.500 571v3M465.500 571v3" fill="none" stroke="#444" />
              <text x="331" y="566">0</text>
              <text x="364" y="566">0.17</text>
              <text x="402" y="566">0.35</text>
              <text x="479" y="566">0.7 Kilometers</text>
            </g>

            <path d="M318.500 191.500h519v390h-519z" fill="none" stroke="#444" />
            {#each handles as [x, y]}<rect x={x - 2.500} y={y - 2.500} width="5" height="5" fill="#fff" stroke="#444" />{/each}
          </svg>
        </div>
      </div>
      <footer class="status">
        <div class="combo"><select aria-label="Scale"><option>1:8,740</option></select>{@render arrow()}</div>
        <i class="bar"></i>
        <button class="zoom">56%{@render arrow()}</button>
        <i class="bar"></i>
        <button class="snap" aria-label="Snapping">{@render ic('snap')}</button>
        <button aria-label="Grid">{@render ic('gridMini')}</button>
        <i class="bar"></i>
        <span class="coords">5.422 , 1.549</span>
        <span class="selection">{@render ic('zoomSel')}Selected Elements: 1</span>
        <i class="bar"></i>
        <button class="pause" aria-label="Pause drawing"><i></i><i></i></button>
        <i class="bar"></i>
        <button aria-label="Refresh">{@render ic('refresh')}</button>
      </footer>
    </section>

    <aside class="format">
      <div class="pane">
        <div class="pane-head">
          <h1>Format Map Frame</h1>
          {@render arrow()}
          <button aria-label="Pin">{@render ic('pin')}</button>
          <button aria-label="Close">{@render ic('close')}</button>
        </div>
        <p class="subject">Map Frame</p>
        <div class="which"><button>Map Frame</button>{@render arrow()}</div>
        <div class="views">
          {#each ['optList', 'optMap', 'optBrush', 'optPage'] as v, i}
            <button class:on={i === 0} aria-label={v}>{@render ic(v)}</button>
          {/each}
        </div>
        <h3>Options</h3>
        <h4><i class="fold"></i>General</h4>
        <div class="field"><label for="el-name">Name</label><input id="el-name" type="text" value="Map Frame" /></div>
        <label class="check"><input type="checkbox" checked />Visible</label>
        <label class="check"><input type="checkbox" />Locked</label>
        <h4><i class="fold"></i>Map Frame</h4>
        <div class="field">
          <label for="el-map">Map</label>
          <div class="combo">
            <svg class="ic lead" width="12" height="12" viewBox="0 0 12 12">{@html mapArt(0, 0, 12)}</svg>
            <select id="el-map"><option>Map</option></select>{@render arrow()}
          </div>
        </div>
      </div>
      <nav class="pane-tabs">
        {#each paneTabs as t, i}<button class:active={i === 0}>{t}</button>{/each}
      </nav>
    </aside>
  </main>

  <footer class="taskbar">
    <button class="start" aria-label="Start">{@render ic('shell')}</button>
    <div class="apps">
      {#each taskIcons as t, i}
        <button class:front={i === 10} class:running={i === 11 || i === 19} aria-label={t}>{@render ic(t)}</button>
      {/each}
    </div>
    <div class="tray">
      {#each trayIcons as t}<button aria-label={t}>{@render ic(t)}</button>{/each}
      <span>ENG</span>
      <span class="clock">12:42 PM</span>
      <button aria-label="Notifications">{@render ic('notify')}</button>
    </div>
  </footer>
</div>

<style>
  :global(body) {
    margin: 0;
    background: #f1f1f1;
  }

  .app {
    display: flex;
    flex-direction: column;
    height: 100vh;
    overflow: hidden;
    font-family: "Noto Sans", "Open Sans", sans-serif;
    font-size: 10px;
    line-height: 14px;
    color: #3c3c3c;
  }

  .app * {
    box-sizing: border-box;
  }

  button {
    display: flex;
    align-items: center;
    padding: 0;
    border: 0;
    background: none;
    font: inherit;
    color: inherit;
    white-space: nowrap;
  }

  h1, h2, h3, h4, p, ul {
    margin: 0;
    padding: 0;
    font-weight: normal;
    list-style: none;
  }

  .ic {
    display: block;
    flex: none;
    overflow: visible;
  }

  .arrow {
    display: inline-block;
    flex: none;
    margin-left: 4px;
    border: 2px solid transparent;
    border-top: 3px solid #555;
    border-bottom: 0;
    vertical-align: 2px;
  }

  header {
    display: grid;
    grid-template-columns: 432px 65px 1fr;
    grid-template-rows: 30px 22px;
    flex: none;
    background: #f1f1f1;
    border-bottom: 1px solid #cfcfcf;
  }

  .quick {
    display: flex;
    align-items: center;
    gap: 8px;
    padding-left: 9px;
  }

  .quick .custom {
    margin-left: 8px;
    border-top: 1px solid #444;
    padding-top: 2px;
  }

  .quick .custom .arrow {
    margin: 0;
  }

  .tabs {
    grid-row: 2;
    display: flex;
    gap: 4px;
    font-size: 11px;
    color: #6a6a6a;
  }

  .tabs button {
    padding: 0 10px;
    border-top: 2px solid transparent;
    border-left: 1px solid transparent;
    border-right: 1px solid transparent;
  }

  .tabs .file {
    padding: 0 15px;
    background: #0077d1;
    color: #fff;
  }

  .tabs .active {
    background: #f9f9f9;
    border-color: #0077d1 #d0d0d0 transparent;
    margin-bottom: -1px;
    color: #1a73c4;
  }

  .context {
    grid-column: 2;
    grid-row: 1 / 3;
    display: flex;
    flex-direction: column;
    align-items: center;
    justify-content: space-between;
    padding: 4px 0 3px;
    background: #d5daef;
    border-top: 4px solid #0b2dc8;
    color: #666;
  }

  .context button {
    font-size: 11px;
  }

  .title {
    grid-column: 3;
    grid-row: 1;
    display: flex;
    align-items: center;
    gap: 28px;
    padding: 0 14px 2px 10px;
    color: #666;
  }

  .title span {
    flex: 1;
  }

  .title button {
    font-size: 12px;
    font-weight: bold;
    min-width: 12px;
  }

  .account {
    grid-column: 3;
    grid-row: 2;
    display: flex;
    align-items: center;
    justify-content: flex-end;
    gap: 10px;
    padding-right: 6px;
  }

  .account button:first-child {
    gap: 4px;
  }

  .account .arrow {
    margin-left: 0;
  }

  .ribbon {
    display: flex;
    flex: none;
    height: 80px;
    padding-top: 3px;
    background: #f9f9f9;
    border-bottom: 1px solid #c9c9c9;
    color: #333;
  }

  .group {
    display: flex;
    flex-direction: column;
    flex: none;
    margin-bottom: 1px;
    border-right: 1px solid #dcdcdc;
  }

  .group h2 {
    font-size: 10px;
    text-align: center;
  }

  .tools {
    display: flex;
    flex: 1;
  }

  .project { width: 185px; }
  .frames { width: 246px; }
  .surrounds { width: 259px; }
  .text { width: 143px; }
  .graphics { width: 170px; }
  .styles { width: 64px; }
  .favorites { width: 41px; }

  .project .tools {
    display: grid;
    grid-template-columns: 38px 40px 48px 27px 1fr;
  }

  .frames .tools { padding-left: 5px; gap: 3px; }
  .surrounds .tools { padding: 0 5px 0 4px; justify-content: space-between; }
  .text .tools { padding-left: 5px; gap: 3px; }
  .graphics .tools { padding-left: 5px; gap: 6px; }
  .styles .tools { padding-left: 5px; }
  .favorites .tools { justify-content: center; }

  .frames .stack + .stack { margin-left: 16px; }

  .big {
    flex-direction: column;
    min-width: 36px;
    padding-top: 1px;
    line-height: 12px;
  }

  .big .ic {
    margin-bottom: 2px;
  }

  .big .arrow {
    margin-left: 2px;
  }

  .stack {
    display: flex;
    flex-direction: column;
    min-width: 24px;
  }

  .small {
    height: 20px;
  }

  .small span {
    margin-left: 3px;
  }

  .small:disabled {
    color: #a5a5a5;
  }

  main {
    display: flex;
    flex: 1;
    gap: 6px;
    min-height: 0;
    padding: 5px 6px 5px;
    background: #f1f1f1;
  }

  .pane {
    display: flex;
    flex-direction: column;
    background: #f7f9f9;
    border: 1px solid #d5d5d5;
    border-top: 4px solid #c9c9c9;
  }

  .contents {
    flex: none;
    width: 197px;
  }

  .pane-head {
    display: flex;
    align-items: center;
    gap: 6px;
    height: 20px;
    padding: 0 3px 0 4px;
  }

  .pane-head h1 {
    flex: 1;
    font-size: 13px;
    color: #666;
  }

  .pane-head .arrow, .which .arrow {
    border-left-width: 3px;
    border-right-width: 3px;
  }

  .search {
    display: flex;
    align-items: center;
    gap: 6px;
    margin: 9px 3px 0 2px;
  }

  .search label {
    display: flex;
    flex: 1;
    align-items: center;
    min-width: 0;
    height: 21px;
    padding-right: 5px;
    background: #fff;
    border: 1px solid #adadad;
  }

  .search input {
    flex: 1;
    min-width: 0;
    padding: 0 4px;
    border: 0;
    background: none;
    font: inherit;
    outline: 0;
  }

  .search input::placeholder {
    font-style: italic;
    color: #444;
  }

  .search .arrow {
    margin-left: 10px;
    opacity: 0.5;
  }

  .views {
    display: flex;
    align-self: flex-start;
    margin: 5px 0 0 12px;
    border-bottom: 1px solid #ddd;
  }

  .views button {
    justify-content: center;
    width: 28px;
    height: 31px;
    margin-bottom: -1px;
    border-bottom: 2px solid transparent;
  }

  .views .on {
    border-color: #0f6fbd;
  }

  h3 {
    font-size: 12px;
  }

  .contents h3 {
    margin: 13px 0 5px 12px;
  }

  .tree-wrap {
    display: flex;
    flex: 1;
    min-height: 0;
  }

  .tree {
    flex: 1;
    padding-left: 16px;
  }

  .tree li {
    display: flex;
    align-items: center;
    height: 21px;
    margin-right: 3px;
  }

  .tree label {
    display: flex;
    flex: 1;
    align-items: center;
    gap: 3px;
    height: 20px;
    padding-left: 1px;
    border: 1px solid transparent;
  }

  .tree label span, .tree label b {
    margin-left: 1px;
  }

  .tree .selected label {
    background: #c5dbee;
    border-color: #4a9bd8;
  }

  .twist {
    width: 12px;
    flex: none;
  }

  .closed {
    display: block;
    width: 6px;
    margin-left: 3px;
    border: 3px solid transparent;
    border-left: 5px solid #aaa;
    border-right: 0;
  }

  .opened {
    display: block;
    width: 0;
    margin-left: 2px;
    border-left: 5px solid transparent;
    border-bottom: 5px solid #555;
  }

  .tree .map-row {
    gap: 3px;
    padding-left: 10px;
  }

  .tree .layer {
    height: 22px;
    padding-left: 19px;
  }

  .tree .symbol {
    padding-left: 36px;
  }

  .symbol i {
    width: 18px;
    height: 14px;
    border: 1px solid #777;
  }

  .symbol .road, .symbol .road-thin {
    width: 16px;
    height: 2px;
    margin-left: 1px;
    border: 0;
    background: #c8333c;
  }

  .symbol .road-thin {
    height: 1px;
    background: #c98a90;
  }

  .symbol .green { background: #04744c; }
  .symbol .blue { background: #005ce6; }
  .symbol .amber { background: #ffaa00; }

  input[type="checkbox"] {
    position: relative;
    flex: none;
    appearance: none;
    width: 13px;
    height: 13px;
    margin: 0;
    background: #fff;
    border: 1px solid #808080;
  }

  input[type="checkbox"]:checked::after {
    content: "";
    position: absolute;
    left: 4px;
    top: 1px;
    width: 3px;
    height: 6px;
    border: solid #444;
    border-width: 0 1px 1px 0;
    transform: rotate(40deg);
  }

  .scroll {
    display: flex;
    flex-direction: column;
    align-items: center;
    width: 10px;
    gap: 3px;
    padding-bottom: 2px;
  }

  .track {
    flex: 1;
    width: 7px;
    padding-top: 9px;
    background: #e0e0e0;
  }

  .thumb {
    height: 38%;
    background: #737373;
  }

  .s-up, .s-down {
    border: 3px solid transparent;
  }

  .s-up {
    border-top: 0;
    border-bottom: 6px solid #777;
  }

  .s-down {
    border-bottom: 0;
    border-top: 6px solid #777;
  }

  .scroll .faint {
    opacity: 0.25;
  }

  .view {
    display: flex;
    flex: 1;
    flex-direction: column;
    min-width: 0;
    background: #f9fafa;
    border-bottom: 1px solid #d5d5d5;
  }

  .docs {
    display: flex;
    align-items: center;
    height: 20px;
    background: #f1f1f1;
    border-bottom: 2px solid #0f72c2;
  }

  .docs button {
    gap: 4px;
    height: 18px;
    padding: 0 21px 0 5px;
  }

  .docs .active {
    padding: 0 5px;
    background: #0077d1;
    color: #fff;
  }

  .docs > .arrow {
    margin-left: auto;
    margin-right: 4px;
  }

  .board {
    display: grid;
    grid-template-columns: 19px 1fr;
    grid-template-rows: 19px 1fr;
    flex: 1;
    min-height: 0;
  }

  .ruler-h, .ruler-v {
    overflow: hidden;
    background: #fbfbfb;
    font-size: 9px;
    line-height: 9px;
  }

  .ruler-h {
    border-left: 1px solid #555;
    border-bottom: 1px solid #555;
  }

  .ruler-v {
    border: 1px solid #555;
  }

  .ruler-h svg, .ruler-v svg {
    display: block;
  }

  .ruler-h text, .ruler-v text {
    fill: #777;
  }

  .canvas {
    overflow: hidden;
    min-width: 0;
    background: #dfdfde;
  }

  .canvas svg {
    display: block;
  }

  .map-title {
    font: 9px "DejaVu Sans", sans-serif;
    fill: #111;
    stroke: #111;
    stroke-width: 0.2;
  }

  .compass text {
    font: 11px "Liberation Sans", sans-serif;
    text-anchor: middle;
  }

  .legend text {
    font-size: 6px;
    fill: #111;
    stroke: #111;
    stroke-width: 0.1;
  }

  .legend .head {
    font-size: 12px;
  }

  .scale text {
    font: 7px "Liberation Sans", sans-serif;
  }

  .status {
    display: flex;
    flex: none;
    align-items: center;
    gap: 6px;
    height: 20px;
    padding: 0 4px 0 23px;
  }

  .combo {
    position: relative;
    display: flex;
    flex: 1;
    align-items: center;
  }

  .combo select {
    appearance: none;
    width: 100%;
    height: 19px;
    padding: 0 4px;
    border: 1px solid #adadad;
    border-radius: 0;
    background: #fff;
    font: inherit;
    color: inherit;
  }

  .combo .arrow {
    position: absolute;
    right: 4px;
  }

  .status .combo {
    flex: none;
    width: 88px;
  }

  .combo .lead {
    position: absolute;
    left: 4px;
  }

  .combo .lead + select {
    padding-left: 20px;
  }

  .bar {
    width: 1px;
    height: 13px;
    background: #aaa;
  }

  .zoom {
    padding-left: 4px;
  }

  .zoom .arrow {
    margin-left: 8px;
  }

  .snap {
    background: #a9d5f0;
  }

  .coords {
    flex: 1;
    text-align: center;
  }

  .selection {
    display: flex;
    align-items: center;
    gap: 3px;
  }

  .pause {
    gap: 3px;
    padding: 0 2px;
  }

  .pause i {
    width: 4px;
    height: 13px;
    background: #777;
  }

  .format {
    display: flex;
    flex: none;
    flex-direction: column;
    width: 255px;
  }

  .format .pane {
    flex: 1;
  }

  .subject {
    margin-top: 8px;
    padding-left: 4px;
    font-size: 12px;
    text-align: center;
    color: #444;
  }

  .which {
    display: flex;
    align-items: center;
    gap: 10px;
    margin: 8px 0 0 6px;
    font-size: 11px;
  }

  .which button {
    height: 18px;
    border-bottom: 2px solid #0f6fbd;
  }

  .format .views {
    margin: 16px 0 0 5px;
  }

  .format h3 {
    margin: 16px 0 3px 5px;
  }

  .format h4 {
    display: flex;
    align-items: center;
    gap: 5px;
    height: 18px;
    padding-left: 12px;
    font-size: 11px;
  }

  .fold {
    width: 5px;
    height: 5px;
    border: solid #444;
    border-width: 0 1px 1px 0;
    transform: rotate(45deg);
  }

  .field {
    display: flex;
    align-items: center;
    gap: 5px;
    height: 19px;
    margin-right: 17px;
  }

  .field label {
    width: 51px;
    padding-left: 23px;
  }

  .field input {
    flex: 1;
    min-width: 0;
    height: 19px;
    padding: 0 4px;
    border: 1px solid #adadad;
    background: #fff;
    font: inherit;
    color: inherit;
  }

  .check {
    display: flex;
    align-items: center;
    gap: 4px;
    height: 19px;
    padding-left: 56px;
  }

  .pane-tabs {
    display: flex;
    flex: none;
    height: 19px;
  }

  .pane-tabs button {
    flex: 1;
    justify-content: center;
  }

  .pane-tabs .active {
    background: #f7f9f9;
    border: 1px solid #d5d5d5;
    border-top: 0;
    color: #1a73c4;
  }

  .taskbar {
    display: flex;
    flex: none;
    height: 27px;
    background: linear-gradient(90deg, #d9e6ee, #d4e1e7);
  }

  .start {
    width: 47px;
    justify-content: center;
    align-items: flex-start;
    margin-top: -2px;
  }

  .apps {
    display: flex;
    flex: 1;
    max-width: 650px;
  }

  .apps button {
    flex: 1;
    justify-content: center;
    border-bottom: 2px solid transparent;
  }

  .apps .front {
    background: #f3f7f9;
    border-color: #bd8233;
  }

  .apps .running {
    border-color: #bd8233;
  }

  .tray {
    display: flex;
    align-items: center;
    gap: 7px;
    margin-left: auto;
    padding-right: 22px;
    color: #222;
  }

  .clock {
    margin: 0 8px 0 4px;
  }
</style>
